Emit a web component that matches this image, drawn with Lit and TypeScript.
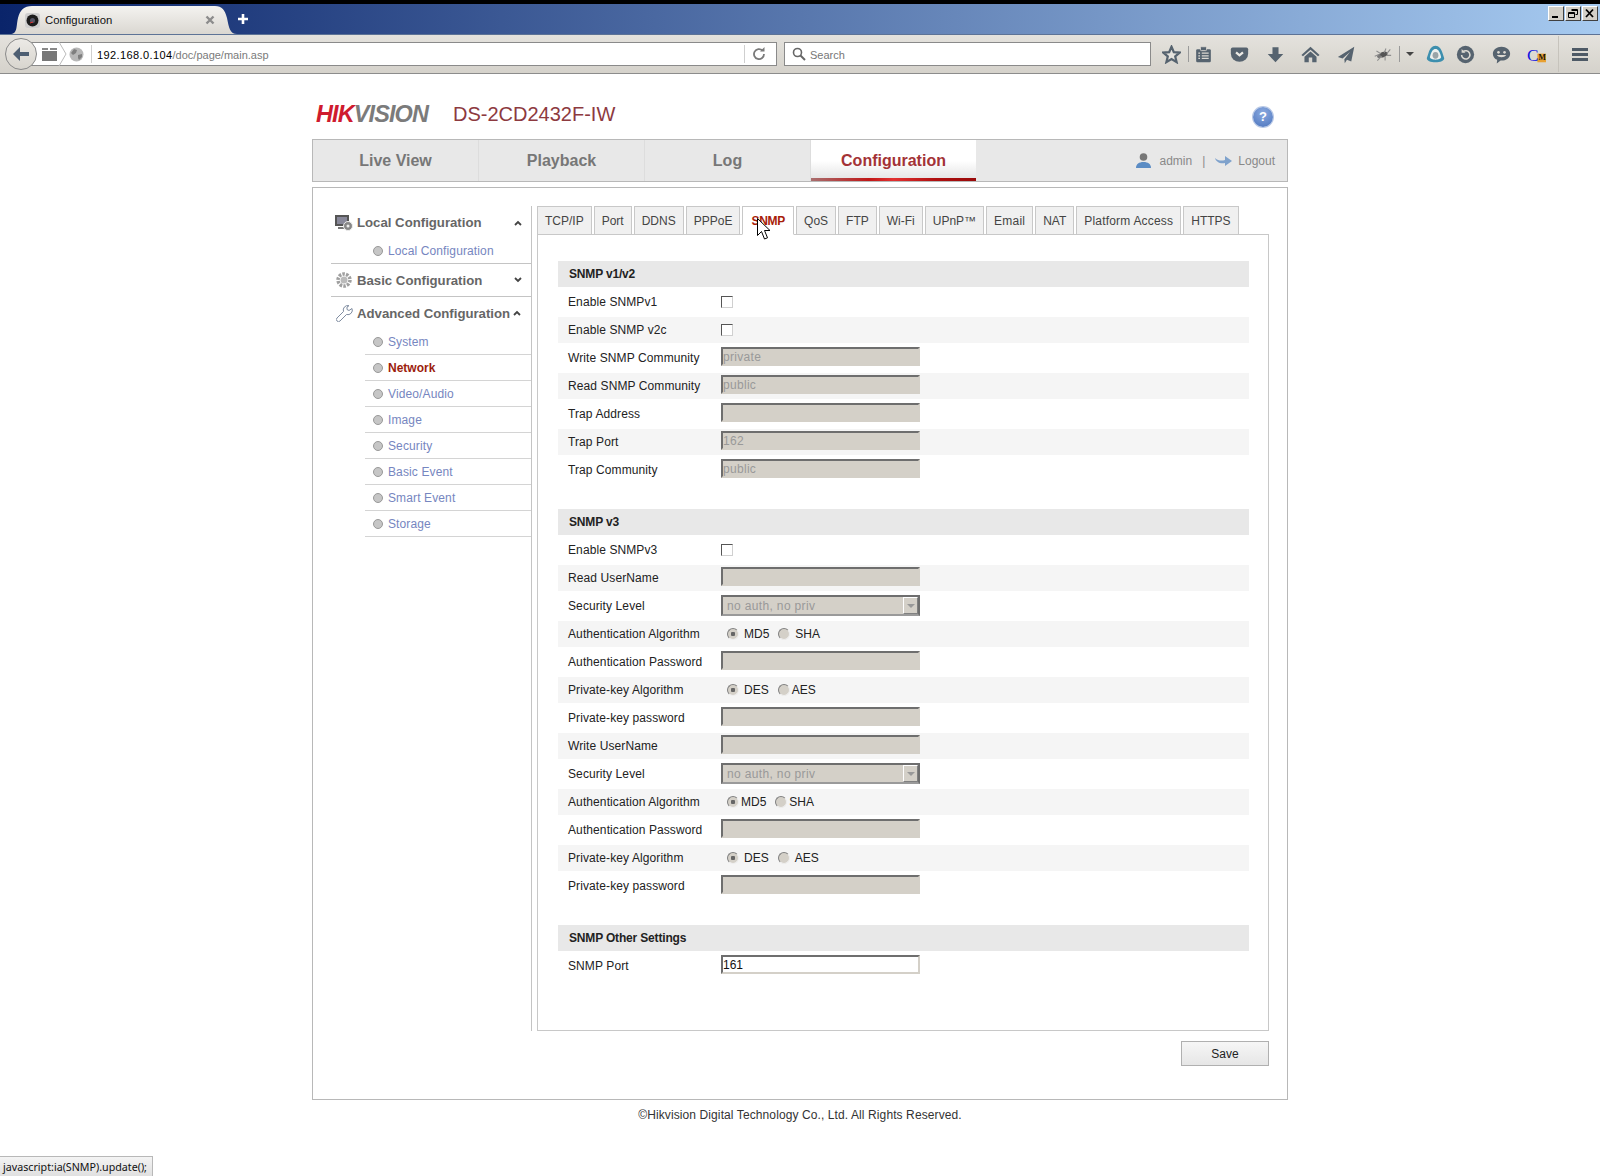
import { LitElement, html, css, svg } from "lit";
import { customElement } from "lit/decorators.js";

type Row =
  | { t: "check"; label: string }
  | { t: "input"; label: string; value?: string; active?: boolean }
  | { t: "select"; label: string }
  | { t: "radio"; label: string; name: string; opts: [string, number][] };

const I = (label: string, value = ""): Row => ({ t: "input", label, value });
const sections: { title: string; rows: Row[] }[] = [
  {
    title: "SNMP v1/v2",
    rows: [
      { t: "check", label: "Enable SNMPv1" },
      { t: "check", label: "Enable SNMP v2c" },
      I("Write SNMP Community", "private"),
      I("Read SNMP Community", "public"),
      I("Trap Address"),
      I("Trap Port", "162"),
      I("Trap Community", "public"),
    ],
  },
  {
    title: "SNMP v3",
    rows: [
      { t: "check", label: "Enable SNMPv3" },
      I("Read UserName"),
      { t: "select", label: "Security Level" },
      { t: "radio", label: "Authentication Algorithm", name: "a1", opts: [["MD5", 5], ["SHA", 5]] },
      I("Authentication Password"),
      { t: "radio", label: "Private-key Algorithm", name: "p1", opts: [["DES", 5], ["AES", 2]] },
      I("Private-key password"),
      I("Write UserName"),
      { t: "select", label: "Security Level" },
      { t: "radio", label: "Authentication Algorithm", name: "a2", opts: [["MD5", 2], ["SHA", 2]] },
      I("Authentication Password"),
      { t: "radio", label: "Private-key Algorithm", name: "p2", opts: [["DES", 5], ["AES", 5]] },
      I("Private-key password"),
    ],
  },
  {
    title: "SNMP Other Settings",
    rows: [{ t: "input", label: "SNMP Port", value: "161", active: true }],
  },
];

const tabs = ["TCP/IP", "Port", "DDNS", "PPPoE", "SNMP", "QoS", "FTP", "Wi-Fi", "UPnP™", "Email", "NAT", "Platform Access", "HTTPS"];
const wideTabs = ["Email", "Platform Access"];
const subs = ["System", "Network", "Video/Audio", "Image", "Security", "Basic Event", "Smart Event", "Storage"];

const ic = "#56636f";
const bg = "#dcd9d3";
const toolIcons = [
  svg`<path d="M4 5h14a1.500 1.500 0 0 1 1.500 1.500v12A1.500 1.500 0 0 1 18 20H4a1.500 1.500 0 0 1-1.500-1.500v-12A1.500 1.500 0 0 1 4 5z" fill="${ic}"/><rect x="7.500" y="2" width="7" height="4.500" rx="1" fill="${ic}" stroke="${bg}"/><path d="M5 9.500h2M9 9.500h8M5 12.500h2M9 12.500h8M5 15.500h2M9 15.500h8" stroke="${bg}" stroke-width="1.500"/>`,
  svg`<path d="M3 3h16a2 2 0 0 1 2 2v5a10 9.500 0 0 1-20 0V5a2 2 0 0 1 2-2z" fill="${ic}"/><path d="M7 8.500l4 3.500 4-3.500" fill="none" stroke="#eceae5" stroke-width="2.600"/>`,
  svg`<path d="M7.500 2.500h7v8H20l-9 9.500-9-9.500h5.500z" fill="${ic}"/>`,
  svg`<path d="M11 2L.5 11.500l1.800 1.500L11 5.500l8.700 7.500 1.800-1.500z" fill="${ic}"/><path d="M11 7.500L4 13.500V20h5v-5.500h4V20h5v-6.500z" fill="${ic}"/>`,
  svg`<path d="M20 2L1 14l5.500 1.500L15 8l-6.500 8.500.5 4.500 2.500-3.800 5 2z" fill="${ic}"/>`,
  svg`<ellipse cx="12" cy="11" rx="5" ry="3" fill="#555" transform="rotate(-20 12 11)"/><circle cx="7" cy="13" r="2.200" fill="#777"/><path d="M2 13l5-2M4 7l5 3M15 4l-2 5M20 5l-4 5M21 12l-5 0M5 18l5-5M14 18l0-5" stroke="#8e8e8e" stroke-width="1.200"/>`,
];
const extIcons: [unknown, number][] = [
  [svg`<path d="M11 1c4 0 6.500 3.500 8 8l2 6c.7 3-4.500 5-10 5S.3 18 1 15l2-6c1.500-4.500 4-8 8-8z" fill="#3d8fae"/><path d="M11 4.500c3 0 4.500 3 5.500 6l1 3.500c0 2-3.500 3-6.500 3s-6.500-1-6.500-3l1-3.500c1-3 2.500-6 5.500-6z" fill="#eef0ee"/><ellipse cx="11" cy="12" rx="3.400" ry="4" fill="#9aa4a8"/>`, 30],
  [svg`<circle cx="11" cy="11" r="10" fill="${ic}"/><path d="M8 8a4.800 4.800 0 1 1-1.500 3.500" fill="none" stroke="#dcd9d2" stroke-width="1.800"/><path d="M6.500 4.500v4.500h4.500z" fill="#dcd9d2"/>`, 30],
  [svg`<path d="M11 2c5.500 0 10 3.500 10 8s-4.500 8-10 8h-1l-4.500 3.500.5-4.500C3 16 1 13.500 1 10c0-4.500 4.500-8 10-8z" fill="${ic}"/><circle cx="7.500" cy="8.500" r="1.500" fill="#dcd9d2"/><circle cx="14.500" cy="8.500" r="1.500" fill="#dcd9d2"/><path d="M5.500 11.500c2.500 3.500 8.500 3.500 11 0z" fill="#dcd9d2"/>`, 42],
];

@customElement("app-root")
export class AppRoot extends LitElement {
  static styles = css`
    :host { display: block; position: relative; height: 1176px; overflow: hidden; background: #fff; font-family: "Liberation Sans", Arial, sans-serif; font-size: 12px; color: #333; }
    * { box-sizing: border-box; }
    .titlebar { height: 34px; border-top: 4px solid #000; background: linear-gradient(90deg, #0a246a, #a6caf0); display: flex; align-items: flex-end; padding-left: 10px; }
    .btab { width: 227px; height: 28px; background: linear-gradient(#f4f3f0, #dad7d1); clip-path: path("M0 28C8 28 6 20 8 12C10 4 14 0 22 0L205 0C212 0 215 4 217 12C219 22 220 28 227 28Z"); display: flex; align-items: center; padding: 0 0 0 15px; font-size: 11.300px; color: #111; }
    .fav { width: 15px; height: 15px; margin-right: 5px; flex: none; }
    .btab span { flex: 1; }
    .btab .x { flex: none; width: 10px; margin-right: 22px; }
    .plus { width: 12px; height: 12px; margin: 0 0 9px 0; flex: none; }
    .wc { margin-left: auto; display: flex; gap: 1px; align-self: flex-start; margin-top: 2px; padding-right: 2px; }
    .wc div { width: 16px; height: 15px; background: #d4d0c8; border: 1px solid; border-color: #fff #404040 #404040 #fff; }
    .wc svg { display: block; width: 14px; height: 13px; }
    .toolbar { height: 40px; background: linear-gradient(#e4e2dd, #d5d2cb); border-top: 1px solid #5d7396; border-bottom: 1px solid #8c8c8c; display: flex; align-items: center; padding-left: 5px; position: relative; }
    .back { width: 32px; height: 32px; border-radius: 50%; background: linear-gradient(#eceae6, #d8d5ce); border: 1px solid #8a8a8a; flex: none; display: flex; align-items: center; justify-content: center; z-index: 1; }
    .url { width: 746px; height: 24px; margin-left: -6px; background: #fff; border: 1px solid #8a8a8a; border-left: 0; display: flex; align-items: center; padding-left: 11px; font-size: 11px; color: #000; }
    .url .sep { width: 1px; height: 18px; background: #cfcfcf; margin: 0 7px; flex: none; }
    .url .sep.first { margin-right: 5px; }
    .url b { font-weight: 400; letter-spacing: .4px; padding-top: 1px; }
    .url i { font-style: normal; color: #7a7a7a; flex: 1; padding-top: 1px; }
    .search { width: 367px; height: 24px; margin-left: 7px; background: #fff; border: 1px solid #8a8a8a; display: flex; align-items: center; padding-left: 7px; gap: 4px; font-size: 11px; color: #777; flex: none; }
    .search span { padding-top: 1px; }
    .tools { display: flex; align-items: center; margin-left: 11px; height: 100%; }
    .tools svg { display: block; width: 19px; height: 19px; flex: none; }
    .star { margin-right: 7px; }
    .slot { width: 35.700px; display: flex; justify-content: center; flex: none; }
    .vsep { width: 1px; height: 16px; background: #9a9a9a; flex: none; }
    .vsep.a { margin-right: -3px; }
    .vsep.b { margin-left: -1.400px; }
    .vsep.tall { height: 36px; background: #c6c3bc; margin: 0 13px 0 7px; }
    .caret { width: 0; height: 0; border: 4px solid transparent; border-top: 4px solid #444; border-bottom: 0; margin: 0 7px 0 6px; flex: none; }
    .burger { width: 16px; height: 13px; border-top: 3px solid #4e5a66; border-bottom: 3px solid #4e5a66; display: flex; align-items: center; flex: none; }
    .burger::after { content: ""; display: block; width: 100%; height: 3px; background: #4e5a66; }

    .page { width: 976px; margin: 0 auto; }
    .head { height: 65px; display: flex; align-items: center; padding: 16px 15px 0 4px; }
    .logo { font-weight: 700; font-style: italic; font-size: 23.500px; letter-spacing: -.9px; color: #7b7b7b; width: 137px; white-space: nowrap; }
    .logo em { color: #cf1b2e; font-style: italic; }
    .model { font-size: 20px; color: #8d3a3f; flex: 1; }
    .help { width: 20px; height: 20px; margin-top: 4px; border-radius: 50%; background: radial-gradient(circle at 50% 30%, #8cabe0, #4a73bd); color: #fff; font-weight: 700; font-size: 13px; display: flex; align-items: center; justify-content: center; box-shadow: 0 0 0 1px #b9c9e6; }
    .nav { height: 43px; background: #e8e8e8; border: 1px solid #b8b8b8; display: flex; align-items: stretch; }
    .nav .m { width: 166px; display: flex; align-items: center; justify-content: center; font-size: 16px; font-weight: 700; color: #777; border-right: 1px solid #ddd; }
    .nav .m.on { width: 165px; background: linear-gradient(#fff 55%, #e6e6e6); color: #a33236; border-right: 0; border-bottom: 3px solid; border-image: linear-gradient(90deg, #a87070, #c01818 35%, #e23030 50%, #b01010 75%, #980a0a) 1; padding-top: 4px; }
    .user { margin-left: auto; display: flex; align-items: center; padding-right: 12px; color: #888; }
    .user svg { display: block; }
    .user .bar { margin: 0 10px; }
    .box { margin-top: 5px; height: 913px; border: 1px solid #b8b8b8; padding: 18px 18px 0 18px; display: flex; align-items: flex-start; }
    .side { width: 201px; height: 825px; border-right: 1px solid #c4c4c4; flex: none; }
    .h { height: 33px; display: flex; align-items: center; font-size: 13.200px; font-weight: 700; color: #666; border-bottom: 1px solid #c4c4c4; }
    .h.noline { border-bottom: 0; }
    .h svg { display: block; flex: none; }
    .h .ico { width: 26px; display: flex; justify-content: center; flex: none; }
    .h .chev { margin-left: auto; margin-right: 9px; }
    .h .lbl { white-space: nowrap; }
    .adv { height: 32px; }
    .sub { margin-left: 34px; height: 26px; display: flex; align-items: center; border-bottom: 1px solid #d4d4d4; color: #7686c0; padding-left: 8px; letter-spacing: .12px; }
    .sub::before { content: ""; width: 8px; height: 8px; border-radius: 50%; background: #c6c6c6; border: 1px solid #999; margin-right: 5px; flex: none; }
    .sub.on { color: #9c1c0c; font-weight: 700; letter-spacing: 0; }
    .sub.solid { border-bottom-color: #c4c4c4; margin-left: 0; padding-left: 42px; height: 25px; }
    .main { margin-left: 5px; width: 732px; }
    .tabs { display: flex; gap: 2px; height: 29px; position: relative; z-index: 1; }
    .tab { height: 29px; padding: 1px 7px 0; border: 1px solid #c8c8c8; background: #f0f0f0; color: #444; display: flex; align-items: center; white-space: nowrap; }
    .tab.wide { letter-spacing: .2px; }
    .tab.on { background: #fff; border-bottom-color: #fff; color: #a81c08; font-weight: 700; letter-spacing: -.25px; padding: 1px 8px 0; }
    .panel { height: 797px; margin-top: -1px; border: 1px solid #c8c8c8; padding: 26px 19px 0 20px; }
    .sec { margin-bottom: 26px; }
    .sec h3 { margin: 0 0 2px; height: 26px; background: #e8e8e8; font-size: 12px; font-weight: 700; color: #222; display: flex; align-items: center; padding-left: 11px; letter-spacing: -.17px; }
    .row { height: 26px; margin-bottom: 2px; display: flex; align-items: center; color: #222; }
    .row:nth-of-type(even) { background: #f5f5f5; }
    .row label { width: 163px; padding-left: 10px; flex: none; white-space: nowrap; letter-spacing: .1px; }
    input[type="text"] { width: 199px; height: 19px; margin: 0 0 3px; padding: 0; border: 2px solid; border-color: #6e6e6e #d4d0c8 #d4d0c8 #6e6e6e; background: #d4d0c8; font: 12px "Liberation Sans", Arial, sans-serif; letter-spacing: .3px; color: #999; -webkit-text-fill-color: #999; opacity: 1; outline: 0; border-radius: 0; }
    input.act { background: #fff; color: #111; -webkit-text-fill-color: #111; letter-spacing: 0; }
    input[type="checkbox"] { appearance: none; margin: 0; width: 12px; height: 12px; background: #fff; border: 1px solid; border-color: #555 #d0d0d0 #d0d0d0 #555; border-radius: 0; }
    input[type="radio"] { appearance: none; margin: 0; width: 12px; height: 12px; border-radius: 50%; background: #d4d0c8; border: 1px solid; border-color: #808080 #eee #eee #808080; flex: none; }
    input[type="radio"]:checked { background: radial-gradient(circle, #666 0 2px, #d4d0c8 2.500px); }
    .rg { display: flex; align-items: center; }
    .sel { width: 199px; height: 21px; margin-bottom: 1px; border: 2px solid; border-color: #6e6e6e #6e6e6e #9a9a9a #6e6e6e; background: #d4d0c8; color: #999; display: flex; align-items: center; padding-left: 4px; letter-spacing: .35px; }
    .sel span { flex: 1; }
    .sel i { width: 15px; height: 17px; background: #d4d0c8; border: 1px solid; border-color: #fff #808080 #808080 #fff; display: flex; align-items: center; justify-content: center; }
    .sel i::after { content: ""; border: 4px solid transparent; border-top: 4px solid #999; border-bottom: 0; }
    .foot { display: flex; justify-content: flex-end; margin-top: 10px; }
    .save { width: 88px; height: 25px; background: linear-gradient(#f6f6f6, #e6e6e6); border: 1px solid #b0b0b0; font: 12px "Liberation Sans", Arial, sans-serif; color: #222; padding: 0; border-radius: 0; }
    .copy { text-align: center; margin-top: 8px; color: #333; line-height: 14px; letter-spacing: .1px; }
    .status { position: absolute; left: 0; bottom: 0; width: 153px; height: 20px; background: linear-gradient(#f4f4f4, #e0e0e0); border-top: 1px solid #b8b8b8; border-right: 1px solid #b8b8b8; padding: 2px 0 0 3px; font-family: "Noto Sans", sans-serif; font-size: 10.700px; color: #111; line-height: 16px; white-space: nowrap; }
    .cursor { position: absolute; left: 757px; top: 218px; width: 13px; height: 22px; z-index: 5; }
  `;

  private row(r: Row) {
    let c;
    if (r.t === "check") c = html`<input type="checkbox" disabled />`;
    else if (r.t === "input") c = html`<input type="text" class=${r.active ? "act" : ""} .value=${r.value ?? ""} ?disabled=${!r.active} />`;
    else if (r.t === "select") c = html`<div class="sel"><span>no auth, no priv</span><i></i></div>`;
    else
      c = html`<div class="rg">
        ${r.opts.map(
          ([l, g], i) => html`<input type="radio" name=${r.name} ?checked=${i === 0} disabled style="margin-left:${i === 0 ? 6 : 9}px;margin-right:${g}px" /><span>${l}</span>`
        )}
      </div>`;
    return html`<div class="row"><label>${r.label}</label>${c}</div>`;
  }

  render() {
    return html`
      <div class="titlebar">
        <div class="btab">
          <svg class="fav" viewBox="0 0 15 15"><rect width="15" height="15" rx="3" fill="#cfcfcf"/><circle cx="7.500" cy="7.500" r="6" fill="#1c1c1c"/><circle cx="7.500" cy="7.500" r="2.500" fill="#556"/><path d="M5 10l3-1" stroke="#d33" stroke-width="1"/></svg>
          <span>Configuration</span>
          <svg class="x" viewBox="0 0 10 10"><path d="M1.500 1.500l7 7M8.500 1.500l-7 7" stroke="#8c8c8c" stroke-width="2.400"/></svg>
        </div>
        <svg class="plus" viewBox="0 0 12 12"><path d="M6 1v10M1 6h10" stroke="#fff" stroke-width="2.600"/></svg>
        <div class="wc">
          <div><svg viewBox="0 0 14 13"><path d="M3 10h6" stroke="#000" stroke-width="2"/></svg></div>
          <div><svg viewBox="0 0 14 13"><path d="M5.500 2.500h6v5h-2M2.500 5.500h6v5h-6z M2.500 6.500h6M5.500 3.500h6" fill="none" stroke="#000"/></svg></div>
          <div><svg viewBox="0 0 14 13"><path d="M3 2.500l7 7.500M10 2.500L3 10" stroke="#000" stroke-width="1.800"/></svg></div>
        </div>
      </div>
      <div class="toolbar">
        <div class="back"><svg width="18" height="16" viewBox="0 0 18 16"><path d="M8 1L1 8l7 7V10h9V6H8z" fill="#4e5f72"/></svg></div>
        <div class="url">
          <svg width="15" height="13" viewBox="0 0 15 13" style="flex:none"><path d="M0 3h15v10H0z" fill="#777"/><path d="M0 0h6v2H0zM8 0h7v2H8z" fill="#888"/></svg>
          <svg width="10" height="24" viewBox="0 0 10 24" style="flex:none;margin:0 1px"><path d="M1 0l7 12-7 12" fill="none" stroke="#bbb"/></svg>
          <svg width="15" height="15" viewBox="0 0 15 15" style="flex:none"><circle cx="7.500" cy="7.500" r="7" fill="#b8b8b8"/><path d="M5 2l3 1-1 3-3 2-2-2zM9 8l4-1 0 3-3 3-1-2z" fill="#7f7f7f"/></svg>
          <div class="sep first"></div>
          <b>192.168.0.104</b><i>/doc/page/main.asp</i>
          <div class="sep"></div>
          <svg width="14" height="14" viewBox="0 0 14 14" style="flex:none;margin-right:10px"><path d="M12 7a5 5 0 1 1-1.500-3.500" fill="none" stroke="#7a7a7a" stroke-width="1.800"/><path d="M8 4.500h4.500V0z" fill="#7a7a7a"/></svg>
        </div>
        <div class="search">
          <svg width="14" height="14" viewBox="0 0 14 14"><circle cx="5.500" cy="5.500" r="4" fill="none" stroke="#666" stroke-width="1.600"/><path d="M8.500 8.500l4.500 4.500" stroke="#666" stroke-width="2"/></svg>
          <span>Search</span>
        </div>
        <div class="tools">
          <svg class="star" viewBox="0 0 22 22"><path d="M11 2l2.700 6.200 6.700.6-5.100 4.400 1.600 6.600L11 16.300 5.100 19.800l1.600-6.600L1.600 8.800l6.700-.6z" fill="#e4e2dd" stroke="${ic}" stroke-width="2.600"/></svg>
          <div class="vsep a"></div>
          ${toolIcons.map((p) => html`<div class="slot"><svg viewBox="0 0 22 22">${p}</svg></div>`)}
          <div class="vsep b"></div>
          <div class="caret"></div>
          ${extIcons.map(([p, w]) => html`<div class="slot" style="width:${w}px"><svg viewBox="0 0 22 22">${p}</svg></div>`)}
          <div class="slot" style="width:28px"><svg viewBox="0 0 22 22"><rect x="12" y="10" width="10" height="10" fill="#e8a030"/><text x="0" y="18" font-family="Liberation Serif" font-size="20" fill="#1515e0">C</text><text x="13.400" y="17" font-family="Liberation Serif" font-weight="700" font-size="9" fill="#111">M</text></svg></div>
          <div class="vsep tall"></div>
          <div class="burger"></div>
        </div>
      </div>

      <div class="page">
        <div class="head">
          <div class="logo"><em>HIK</em>VISION</div>
          <div class="model">DS-2CD2432F-IW</div>
          <div class="help">?</div>
        </div>
        <div class="nav">
          <div class="m">Live View</div>
          <div class="m">Playback</div>
          <div class="m">Log</div>
          <div class="m on">Configuration</div>
          <div class="user">
            <svg width="17" height="15" viewBox="0 0 17 15"><circle cx="8.500" cy="4" r="3.800" fill="#777"/><path d="M1 15c0-4 3-6 7.500-6S16 11 16 15z" fill="#5b8cc4"/></svg>
            <span style="margin-left:7px">admin</span><span class="bar">|</span>
            <svg width="17" height="11" viewBox="0 0 17 11"><path d="M0 3c3 3 7 3 10 2V1l7 5-7 5V8C5 9 1 7 0 3z" fill="#7fa2cc"/></svg>
            <span style="margin-left:6px">Logout</span>
          </div>
        </div>
        <div class="box">
          <div class="side">
            <div class="h noline">
              <span class="ico"><svg width="18" height="16" viewBox="0 0 18 16"><rect x="0" y="0" width="14" height="11" fill="#555"/><rect x="2" y="2" width="10" height="7" fill="#889"/><rect x="3" y="12" width="8" height="2" fill="#777"/><circle cx="13" cy="11" r="4.500" fill="#888" stroke="#eee"/><circle cx="13" cy="11" r="1.500" fill="#eee"/></svg></span>
              <span class="lbl">Local Configuration</span>
              <svg class="chev" width="8" height="6" viewBox="0 0 8 6"><path d="M1 5l3-3 3 3" fill="none" stroke="#444" stroke-width="1.800"/></svg>
            </div>
            <div class="sub solid">Local Configuration</div>
            <div class="h">
              <span class="ico"><svg width="16" height="16" viewBox="0 0 16 16"><circle cx="8" cy="8" r="6" fill="none" stroke="#a0a0a0" stroke-width="3.500" stroke-dasharray="2.500 1.200"/><circle cx="8" cy="8" r="3.500" fill="#bbb"/></svg></span>
              <span class="lbl">Basic Configuration</span>
              <svg class="chev" width="8" height="6" viewBox="0 0 8 6"><path d="M1 1l3 3 3-3" fill="none" stroke="#444" stroke-width="1.800"/></svg>
            </div>
            <div class="h noline adv">
              <span class="ico"><svg width="17" height="17" viewBox="0 0 17 17"><path d="M16 3.500l-3 2-2-1 0-2.500L13 .7A4.500 4.500 0 0 0 7.500 6.500L1 13a2 2 0 0 0 3 3l6.500-6.500A4.500 4.500 0 0 0 16 3.500z" fill="#fff" stroke="#7f8ca0" stroke-width="1"/></svg></span>
              <span class="lbl">Advanced Configuration</span>
              <svg class="chev" style="margin-right:10px" width="8" height="6" viewBox="0 0 8 6"><path d="M1 5l3-3 3 3" fill="none" stroke="#444" stroke-width="1.800"/></svg>
            </div>
            ${subs.map((s) => html`<div class="sub ${s === "Network" ? "on" : ""}">${s}</div>`)}
          </div>
          <div class="main">
            <div class="tabs">${tabs.map((t) => html`<div class="tab ${t === "SNMP" ? "on" : ""} ${wideTabs.includes(t) ? "wide" : ""}">${t}</div>`)}</div>
            <div class="panel">
              ${sections.map(
                (s) => html`<div class="sec"><h3>${s.title}</h3>${s.rows.map((r) => this.row(r))}</div>`
              )}
            </div>
            <div class="foot"><button class="save">Save</button></div>
          </div>
        </div>
        <div class="copy">©Hikvision Digital Technology Co., Ltd. All Rights Reserved.</div>
      </div>
      <div class="status">javascript:ia(SNMP).update();</div>
      <svg class="cursor" viewBox="0 0 13 22"><path d="M.5.5v17l4-4 3 7.500 3-1.200-3-7.300h5.500z" fill="#fff" stroke="#000"/></svg>
    `;
  }
}
